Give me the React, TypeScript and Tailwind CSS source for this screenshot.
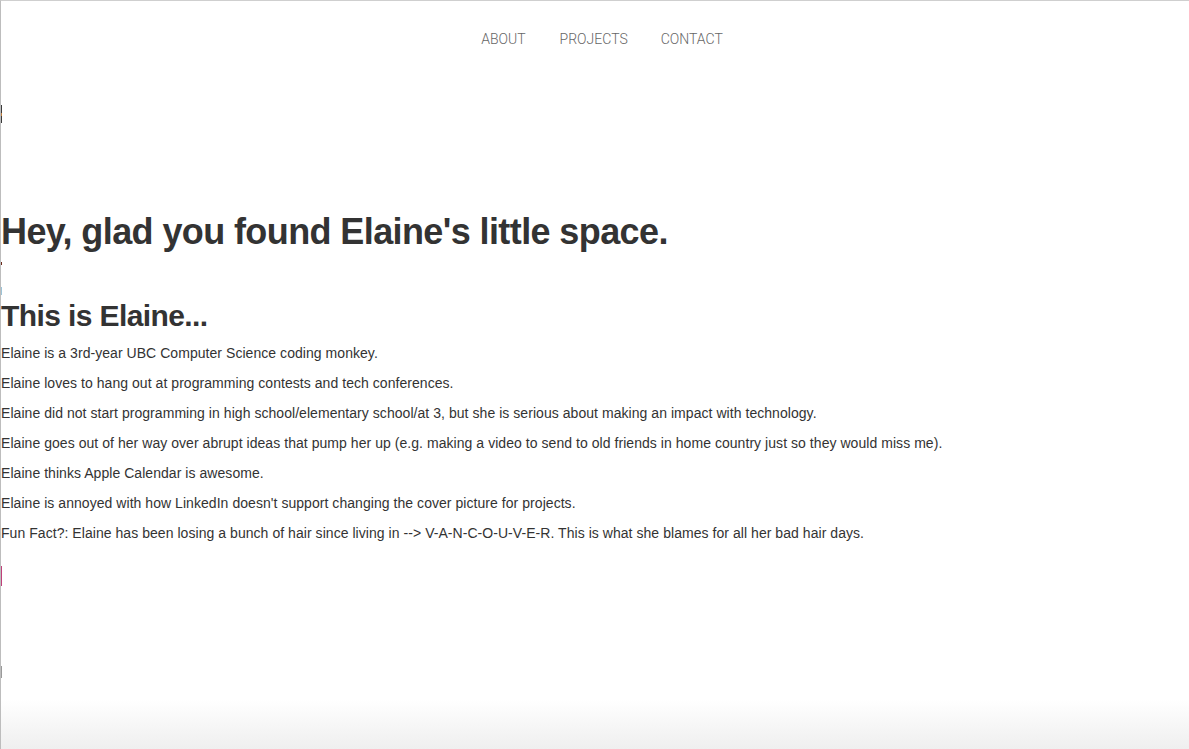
import React from "react";

const paragraphs = [
  "Elaine is a 3rd-year UBC Computer Science coding monkey.",
  "Elaine loves to hang out at programming contests and tech conferences.",
  "Elaine did not start programming in high school/elementary school/at 3, but she is serious about making an impact with technology.",
  "Elaine goes out of her way over abrupt ideas that pump her up (e.g. making a video to send to old friends in home country just so they would miss me).",
  "Elaine thinks Apple Calendar is awesome.",
  "Elaine is annoyed with how LinkedIn doesn't support changing the cover picture for projects.",
  "Fun Fact?: Elaine has been losing a bunch of hair since living in --> V-A-N-C-O-U-V-E-R. This is what she blames for all her bad hair days.",
];

export default function App() {
  return (
    <div className="relative flex h-[749px] w-[1189px] flex-col overflow-hidden border-l border-t border-l-[#bdbdbd] border-t-[#cfcfcf] bg-white text-[#333333] [font-family:'Liberation_Sans',Arial,sans-serif]">
      <nav className="flex justify-center pl-[14px] pt-[28px] [font-family:Roboto,sans-serif] text-[14px] font-light leading-[20px] text-[#666666]">
        <a className="mr-[34px]">ABOUT</a>
        <a className="mr-[33px]">PROJECTS</a>
        <a>CONTACT</a>
      </nav>
      <main>
        <h1 className="mt-[163px] text-[36px] font-bold leading-[40px] tracking-[-0.6px] text-[#333333]">
          Hey, glad you found Elaine's little space.
        </h1>
        <h2 className="mt-[47px] mb-[11px] text-[30px] font-bold leading-[33px] tracking-[-0.6px] text-[#333333]">
          This is Elaine...
        </h2>
        {paragraphs.map((p, i) => (
          <p key={i} className="mb-[10px] text-[14px] leading-[20px] tracking-[0.05px]">
            {p}
          </p>
        ))}
      </main>
      <div className="flex-1" />
      <div className="h-[50px] bg-gradient-to-b from-white to-[#efefef]" />
      <div className="absolute left-0 top-[104px] h-[18px] w-[1px] bg-[#3a3a3a]" />
      <div className="absolute left-0 top-[112px] h-[3px] w-[1px] bg-[#c08040]" />
      <div className="absolute left-0 top-[261px] h-[3px] w-[1px] bg-[#6b2a1a]" />
      <div className="absolute left-0 top-[286px] h-[8px] w-[1px] bg-[#9cc4d8]" />
      <div className="absolute left-0 top-[565px] h-[20px] w-[1px] bg-[#c0407a]" />
      <div className="absolute left-0 top-[665px] h-[12px] w-[1px] bg-[#9a9a9a]" />
    </div>
  );
}
